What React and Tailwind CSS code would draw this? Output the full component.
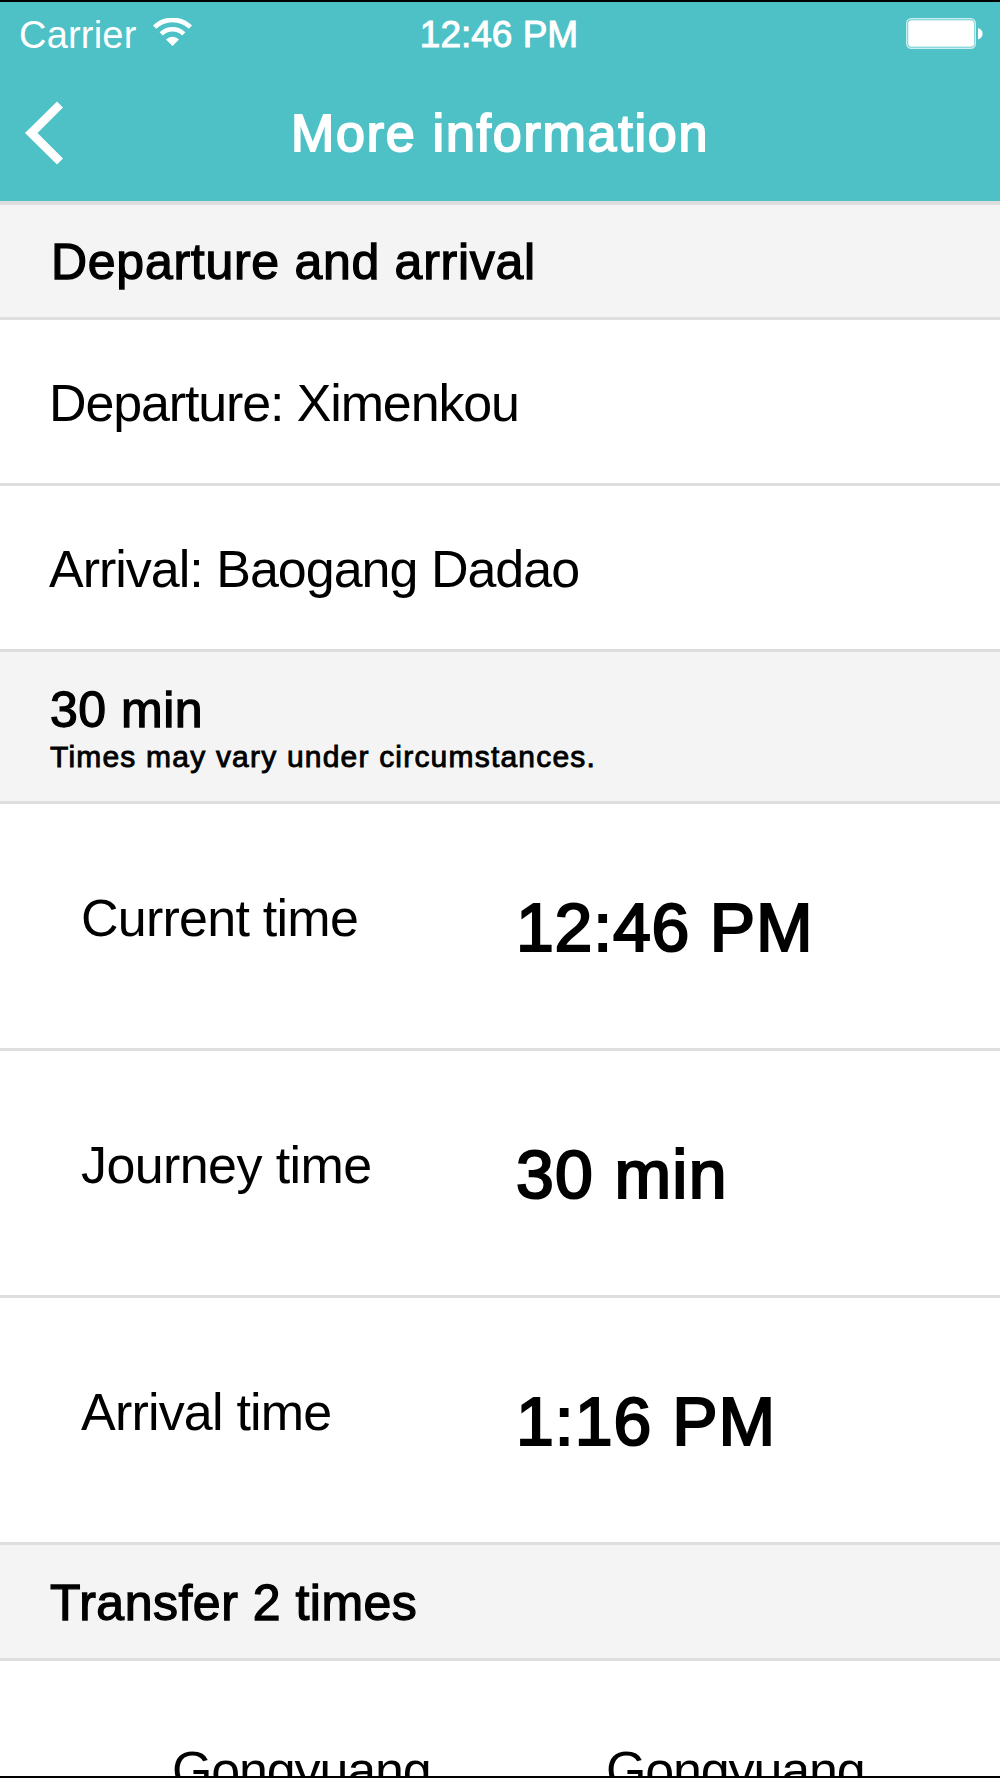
import React from 'react';

const places = [
  { text: 'Departure: Ximenkou', tracking: 'tracking-[-1.13px]', indent: 'pl-[49px]' },
  { text: 'Arrival: Baogang Dadao', tracking: 'tracking-[-1px]', indent: 'pl-[49px]' },
];

const times = [
  { label: 'Current time', value: '12:46 PM', labelTracking: 'tracking-[-0.75px]', valueTracking: 'tracking-[0.8px]' },
  { label: 'Journey time', value: '30 min', labelTracking: 'tracking-[-0.6px]', valueTracking: 'tracking-[1.3px]' },
  { label: 'Arrival time', value: '1:16 PM', labelTracking: 'tracking-[-0.8px]', valueTracking: 'tracking-[1px]' },
];

export default function App() {
  return (
    <div className="w-[1000px] h-[1778px] flex flex-col overflow-hidden bg-white border-t-2 border-b-2 border-black font-['Liberation_Sans',Arial,sans-serif] text-black whitespace-nowrap">
      {/* Status bar + navigation */}
      <header className="h-[199px] shrink-0 bg-[#4dc1c5] text-white">
        <StatusBar />
        <nav className="h-[129px] grid grid-cols-[200px_1fr_200px] items-center">
          <button className="pl-[25px]" aria-label="Back">
            <BackIcon />
          </button>
          <h1 className="text-center text-[52px] leading-[60px] tracking-[1.75px] [-webkit-text-stroke:1.9px_white]">
            More information
          </h1>
        </nav>
      </header>

      <main className="flex-1 min-h-0 flex flex-col overflow-hidden">
        <SectionHeader className="h-[119px] border-t-4" title="Departure and arrival" tracking="tracking-[0.72px]" indent="pl-[51px]" />
        {places.map((p) => (
          <div key={p.text} className={`h-[166px] shrink-0 flex items-center pt-[2px] border-b-3 border-[#dedede] text-[52px] leading-[60px] ${p.indent} ${p.tracking}`}>
            {p.text}
          </div>
        ))}

        <section className="h-[152px] shrink-0 bg-[#f4f4f4] border-b-3 border-[#dedede] pl-[50px] pt-[28px]">
          <h2 className="text-[50px] leading-[60px] tracking-[0.5px] [-webkit-text-stroke:1.3px_black]">30 min</h2>
          <p className="text-[30px] leading-[34px] tracking-[1.2px] [-webkit-text-stroke:0.9px_black]">
            Times may vary under circumstances.
          </p>
        </section>

        {times.map((t) => (
          <TimeRow key={t.label} {...t} />
        ))}

        <SectionHeader className="h-[116px]" title="Transfer 2 times" tracking="tracking-[0.5px]" indent="pl-[50px]" />

        {/* Transfer stations, continues below the fold */}
        <div className="shrink-0 grid grid-cols-[434px_1fr] pl-[172px] pt-[79px] text-[52px] leading-[60px] tracking-[-1.15px]">
          <span>Gongyuang</span>
          <span>Gongyuang</span>
        </div>
      </main>
    </div>
  );
}

const StatusBar = () => (
  <div className="h-[66px] grid grid-cols-[1fr_200px_1fr] items-start">
    <div className="flex items-start pl-[19px]">
      <span className="w-[134px] text-[38px] leading-[40px] pt-[13px] tracking-[0.2px]">Carrier</span>
      <WifiIcon />
    </div>
    <span className="text-center text-[37px] leading-[40px] pt-[13px] pr-[2px] [-webkit-text-stroke:1px_white]">12:46 PM</span>
    <div className="flex justify-end pr-[17px] pt-[16px]">
      <BatteryIcon />
    </div>
  </div>
);

const SectionHeader = ({ title, tracking, indent, className }) => (
  <section className={`shrink-0 flex items-center pt-[2px] bg-[#f4f4f4] border-b-3 border-[#dedede] ${indent} ${className}`}>
    <h2 className={`text-[50px] leading-[60px] [-webkit-text-stroke:1.3px_black] ${tracking}`}>{title}</h2>
  </section>
);

const TimeRow = ({ label, value, labelTracking, valueTracking }) => (
  <div className="h-[247px] shrink-0 grid grid-cols-[435px_1fr] border-b-3 border-[#dedede] pl-[81px]">
    <span className={`pt-[84px] text-[52px] leading-[60px] ${labelTracking}`}>{label}</span>
    <span className={`pt-[83px] text-[68px] leading-[80px] [-webkit-text-stroke:2.2px_black] ${valueTracking}`}>{value}</span>
  </div>
);

const BackIcon = () => (
  <svg width="38" height="64" viewBox="0 0 38 64">
    <path d="M32 0.5L38 6.5L12.5 32L38 57.5L32 63.5L0 32Z" fill="currentColor" />
  </svg>
);

const WifiIcon = () => (
  <svg className="mt-[16px]" width="39" height="28" viewBox="0 0 39 28">
    <g fill="none" stroke="currentColor" strokeWidth="4.6">
      <path d="M1.6 9.2A25.5 25.5 0 0 1 37.4 9.2" />
      <path d="M8.2 15.9A16.2 16.2 0 0 1 30.8 15.9" />
    </g>
    <path d="M19.5 28L13 21.5A9.3 9.3 0 0 1 26 21.5Z" fill="currentColor" />
  </svg>
);

const BatteryIcon = () => (
  <svg width="77" height="31" viewBox="0 0 77 31">
    <rect x="0.75" y="0.75" width="68.5" height="29.5" rx="4.5" fill="none" stroke="currentColor" strokeOpacity="0.7" strokeWidth="1.5" />
    <rect x="2.2" y="2.2" width="65.8" height="26.6" rx="3" fill="currentColor" />
    <path d="M72 10C75 11 76.6 13 76.6 15.7S75 20.4 72 21.4Z" fill="currentColor" />
  </svg>
);
